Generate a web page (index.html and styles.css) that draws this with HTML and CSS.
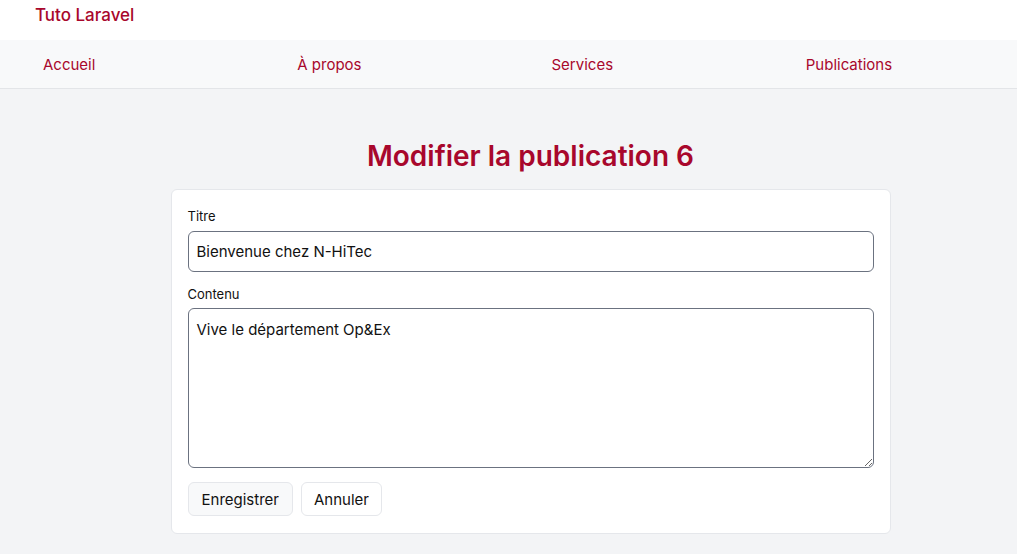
FILE: index.html
```html
<!DOCTYPE html>
<html lang="fr">
<head>
<meta charset="utf-8">
<title>Tuto Laravel</title>
<link rel="stylesheet" href="styles.css">
</head>
<body>
<header class="topbar">
  <a class="brand" href="#">Tuto Laravel</a>
</header>
<nav class="nav">
  <a href="#">Accueil</a>
  <a href="#">À propos</a>
  <a href="#">Services</a>
  <a href="#">Publications</a>
</nav>
<main class="main">
  <h1 class="title">Modifier la publication 6</h1>
  <form class="card">
    <label class="label" for="titre">Titre</label>
    <input class="field" id="titre" type="text" value="Bienvenue chez N-HiTec">
    <label class="label label-tight" for="contenu">Contenu</label>
    <textarea class="field area" id="contenu">Vive le département Op&amp;Ex</textarea>
    <div class="actions">
      <button type="button" class="btn btn-primary">Enregistrer</button>
      <button type="button" class="btn btn-narrow">Annuler</button>
    </div>
  </form>
</main>
</body>
</html>
```
FILE: styles.css
```css
* { box-sizing: border-box; }
html, body { margin: 0; padding: 0; }
body {
  font-family: Inter, "Noto Sans", "Liberation Sans", sans-serif;
  background: #f3f4f6;
  color: #111;
  height: 554px;
  overflow: hidden;
}
a { text-decoration: none; color: #a8072c; }
.topbar {
  background: #fff;
  height: 40px;
  padding: 3px 35px 0;
}
.brand {
  font-size: 17px;
  font-weight: 500;
  line-height: 24px;
}
.nav {
  display: grid;
  grid-template-columns: repeat(4, 1fr);
  background: #f8f9fa;
  border-bottom: 1px solid #e3e5e8;
  height: 49px;
  align-items: center;
  padding-top: 2px;
}
.nav a {
  padding-left: 43px;
  font-size: 15px;
  line-height: 20px;
}
.main {
  display: flex;
  flex-direction: column;
  align-items: center;
  padding-top: 47px;
  padding-left: 44px;
}
.title {
  margin: 0 0 13px;
  font-size: 28px;
  font-weight: 600;
  line-height: 40px;
  color: #a8072c;
}
.card {
  width: 720px;
  background: #fff;
  border: 1px solid #e5e7eb;
  border-radius: 6px;
  padding: 17px 16px 17px;
  display: flex;
  flex-direction: column;
}
.label {
  font-size: 13px;
  line-height: 18px;
  margin-bottom: 6px;
  color: #111;
}
.label-tight { margin-bottom: 5px; }
.field {
  font-family: inherit;
  font-size: 15px;
  color: #111;
  border: 1px solid #6b7280;
  border-radius: 6px;
  padding: 8px 8px;
  background: #fff;
  height: 41px;
  margin-bottom: 13px;
}
.area {
  height: 160px;
  resize: vertical;
  line-height: 20px;
  padding-top: 11px;
  margin-bottom: 14px;
}
.actions {
  display: flex;
  gap: 8px;
}
.btn {
  font-family: inherit;
  font-size: 15px;
  color: #111;
  background: #fff;
  border: 1px solid #e5e7eb;
  border-radius: 6px;
  height: 34px;
  padding: 0 13px;
}
.btn-narrow { padding: 0 12px; }
.btn-primary { background: #f8f9fa; }
```
